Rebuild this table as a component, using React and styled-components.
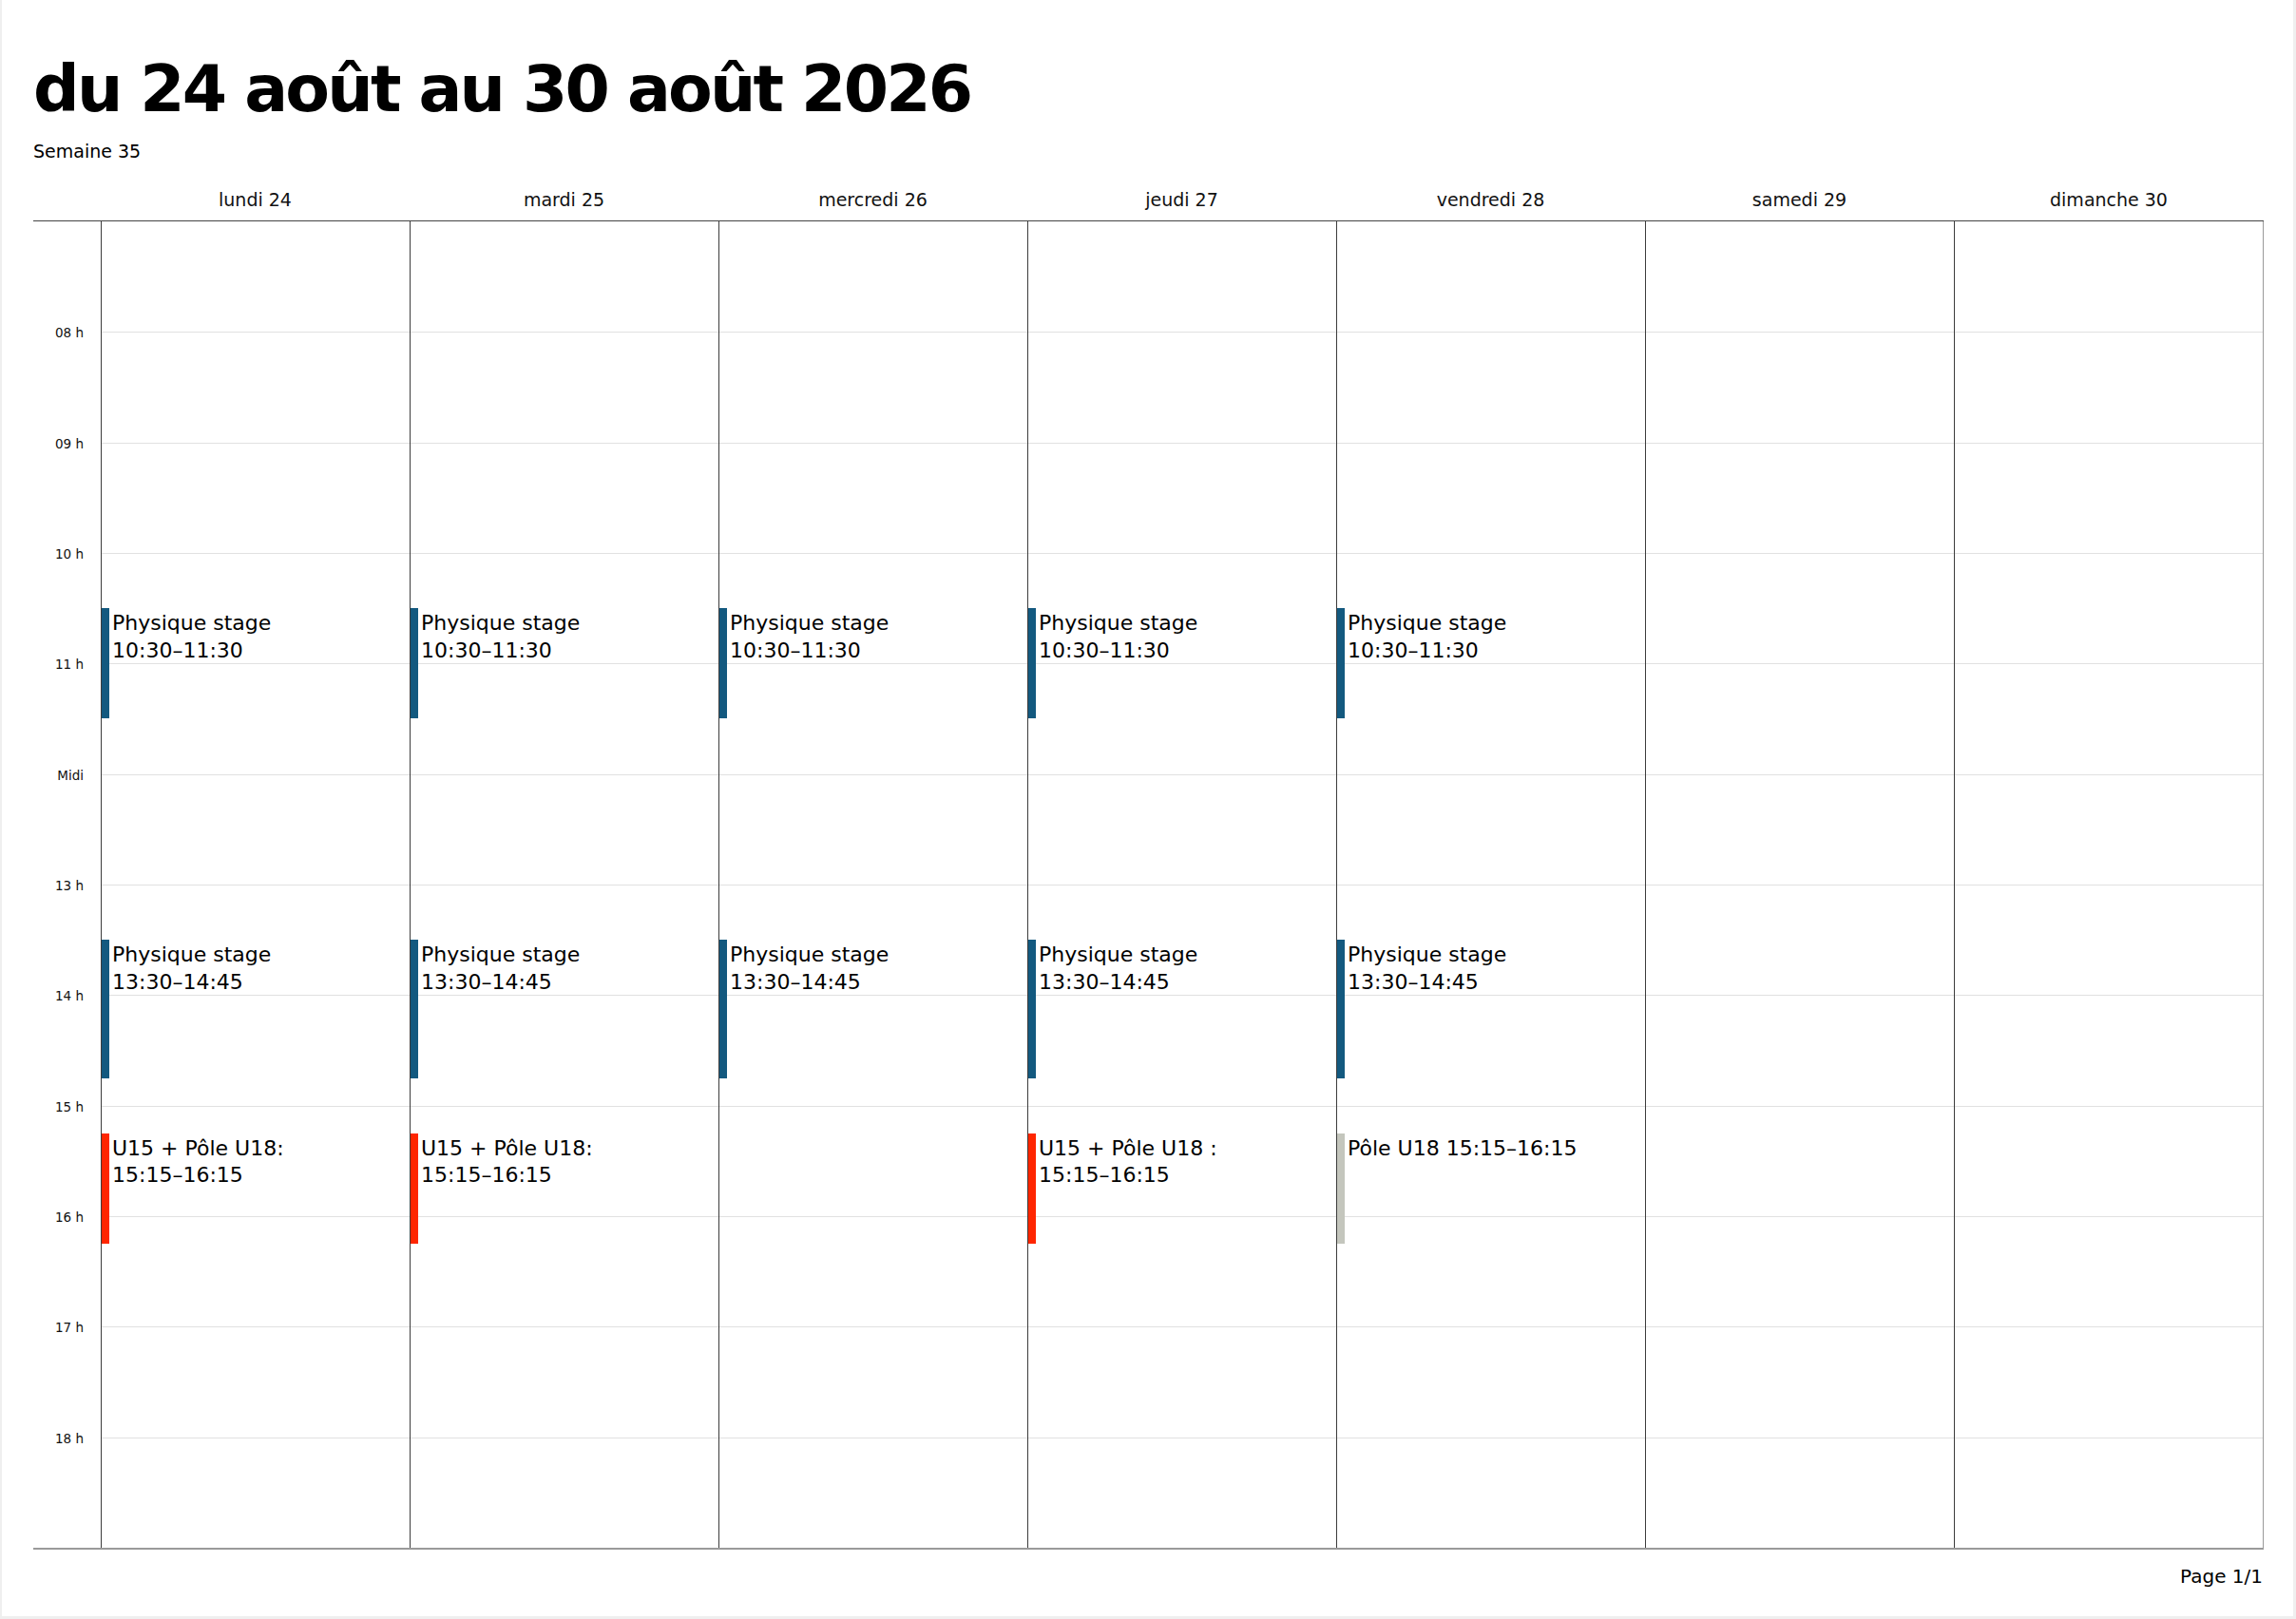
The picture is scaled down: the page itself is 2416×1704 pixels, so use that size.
import React from 'react';
import styled, { createGlobalStyle } from 'styled-components';

const HOUR = 116.33;
const START = 7;
const END = 19;

const BLUE = '#13597f';
const RED = '#ff2600';
const GRAY = '#c4c6bd';

const GlobalStyle = createGlobalStyle`
  html, body { margin: 0; padding: 0; background: #efefef; }
  body { font-family: "DejaVu Sans", "Lucida Grande", sans-serif; color: #000; }
  * { box-sizing: border-box; }
`;

const Sheet = styled.div`
  margin: 0 3px 0 2px;
  height: 1701px;
  background: #fff;
  padding: 0 31px 0 33px;
  display: flex;
  flex-direction: column;
`;

const Title = styled.h1`
  margin: 60px 0 0;
  font-size: 68px;
  line-height: 68px;
  font-weight: bold;
  letter-spacing: -2.8px;
  white-space: nowrap;
`;

const WeekLabel = styled.div`
  margin-top: 20px;
  font-size: 19px;
  line-height: 22px;
`;

const Columns = `
  display: grid;
  grid-template-columns: 71px repeat(6, 325px) 326px;
`;

const HeaderRow = styled.div`
  ${Columns}
  margin-top: 29px;
  padding-bottom: 11px;
  font-size: 19px;
  line-height: 22px;
  color: #111;
`;

const DayName = styled.div`
  text-align: center;
  white-space: nowrap;
`;

const Grid = styled.div`
  ${Columns}
  height: ${12 * HOUR + 3}px;
  border-top: 1px solid #444;
  border-bottom: 2px solid #9a9a9a;
`;

const TimeColumn = styled.div`
  display: flex;
  flex-direction: column;
`;

const TimeSlot = styled.div`
  height: ${HOUR}px;
  display: flex;
  justify-content: flex-end;
  align-items: flex-start;
  padding-right: 18px;
`;

const TimeLabel = styled.span`
  margin-top: -8px;
  font-size: 13.5px;
  line-height: 18px;
  color: #111;
`;

const DayColumn = styled.div`
  position: relative;
  display: flex;
  flex-direction: column;
  border-left: 1px solid #3c3c3c;
  border-right: ${(p) => (p.$last ? '1px solid #9a9a9a' : 'none')};
`;

const HourRow = styled.div`
  height: ${HOUR}px;
  flex: none;
  border-top: ${(p) => (p.$first ? 'none' : '1px solid #e1e1e1')};
`;

const Event = styled.div`
  position: absolute;
  left: 0;
  right: 0;
  display: flex;
  align-items: stretch;
`;

const EventBar = styled.div`
  width: 8px;
  flex: none;
  background: ${(p) => p.$color};
`;

const EventText = styled.div`
  padding: 2px 20px 0 3px;
  font-size: 22px;
  line-height: 28.4px;
  color: #000;
`;

const EventTime = styled.span`
  white-space: nowrap;
`;

const Footer = styled.div`
  margin-top: 17px;
  text-align: right;
  font-size: 20px;
  line-height: 22px;
  padding-right: 1px;
`;

const phys1 = { title: 'Physique stage', time: '10:30–11:30', start: 10.5, end: 11.5, color: BLUE };
const phys2 = { title: 'Physique stage', time: '13:30–14:45', start: 13.5, end: 14.75, color: BLUE };
const u15 = { title: 'U15 + Pôle U18:', time: '15:15–16:15', start: 15.25, end: 16.25, color: RED };

const days = [
  { name: 'lundi 24', events: [phys1, phys2, u15] },
  { name: 'mardi 25', events: [phys1, phys2, u15] },
  { name: 'mercredi 26', events: [phys1, phys2] },
  { name: 'jeudi 27', events: [phys1, phys2, { ...u15, title: 'U15 + Pôle U18 :' }] },
  {
    name: 'vendredi 28',
    events: [phys1, phys2, { title: 'Pôle U18', time: '15:15–16:15', start: 15.25, end: 16.25, color: GRAY }],
  },
  { name: 'samedi 29', events: [] },
  { name: 'dimanche 30', events: [] },
];

const hours = [];
for (let h = START; h < END; h++) hours.push(h);

const hourLabel = (h) => {
  if (h === START) return '';
  if (h === 12) return 'Midi';
  return `${String(h).padStart(2, '0')} h`;
};

export default function App() {
  return (
    <>
      <GlobalStyle />
      <Sheet>
        <Title>du 24 août au 30 août 2026</Title>
        <WeekLabel>Semaine 35</WeekLabel>
        <HeaderRow>
          <div />
          {days.map((d) => (
            <DayName key={d.name}>{d.name}</DayName>
          ))}
        </HeaderRow>
        <Grid>
          <TimeColumn>
            {hours.map((h) => (
              <TimeSlot key={h}>
                <TimeLabel>{hourLabel(h)}</TimeLabel>
              </TimeSlot>
            ))}
          </TimeColumn>
          {days.map((d, i) => (
            <DayColumn key={d.name} $last={i === days.length - 1}>
              {hours.map((h) => (
                <HourRow key={h} $first={h === START} />
              ))}
              {d.events.map((e, j) => (
                <Event
                  key={j}
                  style={{ top: (e.start - START) * HOUR, height: (e.end - e.start) * HOUR }}
                >
                  <EventBar $color={e.color} />
                  <EventText>
                    {e.title} <EventTime>{e.time}</EventTime>
                  </EventText>
                </Event>
              ))}
            </DayColumn>
          ))}
        </Grid>
        <Footer>Page 1/1</Footer>
      </Sheet>
    </>
  );
}
